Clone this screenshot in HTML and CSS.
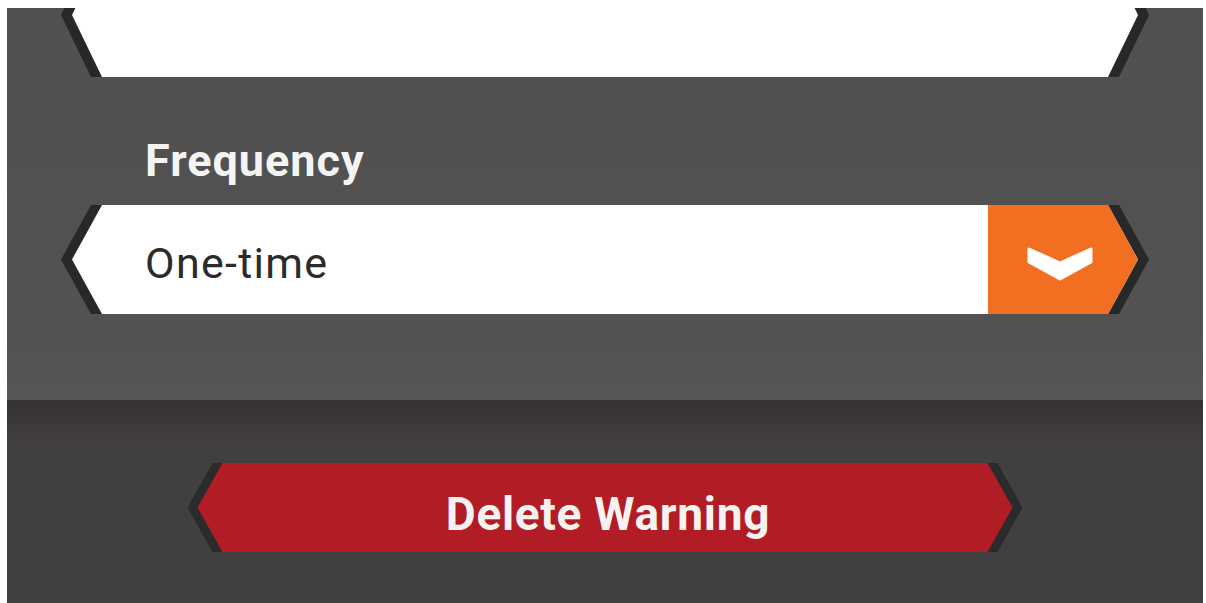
FILE: index.html
```html
<!DOCTYPE html>
<html lang="en">
<head>
<meta charset="utf-8">
<title>Warning settings</title>
<link rel="stylesheet" href="styles.css">
</head>
<body>
<div class="panel">
  <section class="form">
    <div class="field field--top">
      <div class="field__body"></div>
    </div>

    <label class="form__label">Frequency</label>
    <div class="field field--select">
      <div class="field__body">
        <span class="field__value">One-time</span>
        <span class="field__toggle">
          <svg class="chevron" viewBox="0 0 66 36" width="66" height="36" aria-hidden="true">
            <path d="M2 3 L33 17 L64 3 L64 16 L33 33 L2 16 Z" fill="#fff" stroke="#fff" stroke-width="3" stroke-linejoin="round"/>
          </svg>
        </span>
      </div>
    </div>
  </section>

  <section class="actions">
    <button class="btn-delete" type="button">
      <span class="btn-delete__face">Delete Warning</span>
    </button>
  </section>
</div>
</body>
</html>
```

FILE: styles.css
```css
html, body {
  margin: 0;
  padding: 0;
  background: #ffffff;
}

body {
  font-family: Roboto, "Liberation Sans", Arial, sans-serif;
  height: 603px;
  overflow: hidden;
}

.panel {
  margin: 8px 3px 0 7px;
  height: 595px;
  display: flex;
  flex-direction: column;
  overflow: hidden;
}

/* upper grey area holding the inputs */
.form {
  height: 392px;
  flex: none;
  background: linear-gradient(#505050 0%, #525252 80%, #575555 100%);
  display: flex;
  flex-direction: column;
  padding: 0 65px;
  box-sizing: border-box;
}

.form__label {
  display: block;
  margin: 58px 0 18px 73px;
  font-size: 45px;
  line-height: 52px;
  letter-spacing: 1px;
  font-weight: 700;
  color: #f4f4f4;
}

/* hexagonal field with a dark rim on the angled ends */
.field {
  position: relative;
}

.field::before,
.field__body {
  clip-path: polygon(30px 0, calc(100% - 30px) 0, 100% 50%, calc(100% - 30px) 100%, 30px 100%, 0 50%);
}

.field::before {
  content: "";
  position: absolute;
  top: 0;
  bottom: 0;
  left: -11px;
  right: -11px;
  background: #282828;
}

.field__body {
  position: relative;
  height: 100%;
  background: #ffffff;
  display: flex;
  align-items: center;
}

.field--top {
  height: 124px;
  margin-top: -55px;
}

.field--select {
  height: 109px;
}

.field__value {
  flex: 1;
  padding: 6px 0 0 73px;
  font-size: 43px;
  letter-spacing: 1.3px;
  color: #2b2b2b;
}

.field__toggle {
  width: 150px;
  align-self: stretch;
  background: #f26f21;
  display: flex;
  align-items: center;
  justify-content: center;
  padding: 9px 6px 0 0;
  box-sizing: border-box;
}

.chevron {
  display: block;
}

/* lower darker strip with the action button */
.actions {
  flex: 1;
  background: linear-gradient(#363233 0px, #3c3839 20px, #423f40 45px, #423f40 100%);
  display: flex;
  justify-content: center;
  align-items: flex-start;
  padding-top: 63px;
}

.btn-delete {
  position: relative;
  width: 815px;
  height: 89px;
  padding: 0;
  border: 0;
  background: transparent;
  font: inherit;
  cursor: pointer;
}

.btn-delete::before,
.btn-delete__face {
  clip-path: polygon(25px 0, calc(100% - 25px) 0, 100% 50%, calc(100% - 25px) 100%, 25px 100%, 0 50%);
}

.btn-delete::before {
  content: "";
  position: absolute;
  top: 0;
  bottom: 0;
  left: -10px;
  right: -10px;
  background: #2b2b2b;
}

.btn-delete__face {
  position: relative;
  height: 100%;
  display: flex;
  align-items: center;
  justify-content: center;
  background: #b11c25;
  color: #f7f2f2;
  font-size: 46px;
  font-weight: 700;
  letter-spacing: 0.7px;
  padding: 12px 0 0 6px;
  box-sizing: border-box;
}
```
